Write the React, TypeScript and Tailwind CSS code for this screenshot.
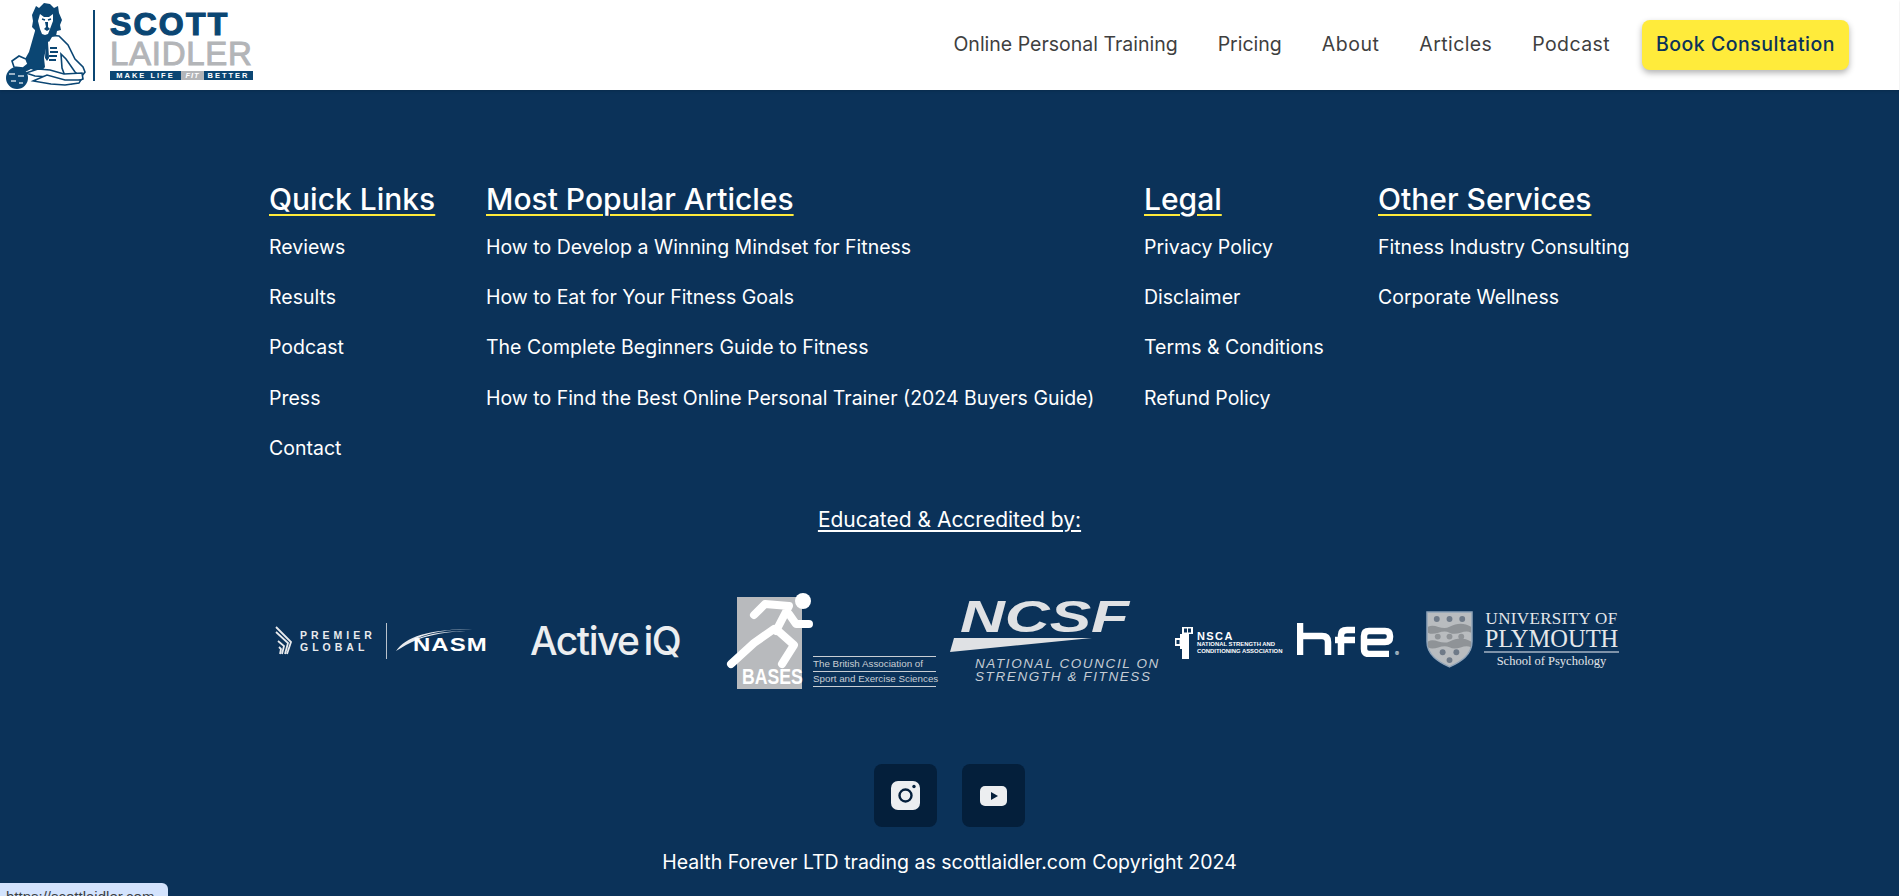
const font = "font-['Inter','Liberation_Sans',sans-serif]";

const navLinks = [
  { label: "Online Personal Training", tracking: "tracking-normal" },
  { label: "Pricing", tracking: "tracking-normal" },
  { label: "About", tracking: "tracking-[0.5px]" },
  { label: "Articles", tracking: "tracking-[0.4px]" },
  { label: "Podcast", tracking: "tracking-[0.4px]" },
];

const columns = [
  {
    title: "Quick Links",
    width: "w-[217px]",
    links: ["Reviews", "Results", "Podcast", "Press", "Contact"],
  },
  {
    title: "Most Popular Articles",
    width: "w-[658px]",
    links: [
      "How to Develop a Winning Mindset for Fitness",
      "How to Eat for Your Fitness Goals",
      "The Complete Beginners Guide to Fitness",
      "How to Find the Best Online Personal Trainer (2024 Buyers Guide)",
    ],
  },
  {
    title: "Legal",
    width: "w-[234px]",
    links: ["Privacy Policy", "Disclaimer", "Terms & Conditions", "Refund Policy"],
  },
  {
    title: "Other Services",
    width: "w-[260px]",
    links: ["Fitness Industry Consulting", "Corporate Wellness"],
  },
];

const Lion = () => (
  <svg viewBox="0 0 84 88" className="w-[84px] h-[88px] shrink-0">
    {/* torso and arm */}
    <path d="M44 34l12 1 9 9 7 14 8 8 2 5-4 5-6-5-9-13-5-5 1 14 3 8-22 3-6-10 4-18z" fill="#ffffff" stroke="#0b4673" strokeWidth="1.6" />
    {/* jacket */}
    <path d="M32 30l10 5 2 8-3 14 1 9-5 6-9-4-6 3-5-4 9-16 4-14z" fill="#0b4673" />
    <path d="M42 36l4 0-1 5 1 16-2 3-2-3 1-16z" fill="#0b4673" />
    {/* abs */}
    <path d="M47 47h7M47 51h8M46 55h8M46 59h7" stroke="#0b4673" strokeWidth="1.8" />
    {/* mane, jagged down to the shoulders */}
    <path d="M33 5l3 2 5-5 6 1 4 4 4-2 1 7 3 7-2 5 1 5-4 1-1 5-4 1-3 5-4-3-4 2-2-5-4-1 0-5-3-3 1-6-1-6z" fill="#0b4673" />
    {/* face */}
    <path d="M37 13l4 3 5 0 4-3 0 7-3 8-2 5-3 1-3-1-2-5-2-8z" fill="#ffffff" />
    <path d="M39 18l3 1M45 19l3-1" stroke="#0b4673" strokeWidth="1.4" />
    <path d="M42 21h3l0 5 2 2-3 2-3-2 2-2z" fill="#0b4673" />
    {/* legs */}
    <path d="M23 72l12-4 12 1 14 4 18-1 1 6-8 3-4 2-10-2-12-5-14-1z" fill="#ffffff" stroke="#0b4673" strokeWidth="1.6" />
    <path d="M30 80l14-6 18 5 16 0-2 3-14 2-14-1z" fill="#ffffff" stroke="#0b4673" strokeWidth="1.4" />
    {/* kettlebell */}
    <circle cx="14" cy="77" r="11" fill="#0b4673" />
    <path d="M6 73h6M15 75h6M8 80h5M16 82h4" stroke="#c7d6e2" strokeWidth="1.3" />
    {/* hand */}
    <path d="M9 60l7-5 7 3 2 5-5 4-9-1z" fill="#ffffff" stroke="#0b4673" strokeWidth="1.6" />
  </svg>
);

const Logo = () => (
  <div className="flex items-center h-[90px] pl-[3px] select-none">
    <Lion />
    <div className="w-[2px] h-[71px] bg-[#0b4673] ml-[6px] mr-[15px]" />
    <div className="flex flex-col w-[143px] font-['Liberation_Sans',sans-serif]">
      <span className="text-[32px] leading-[27px] font-bold text-[#0b4673] tracking-[2.2px] [-webkit-text-stroke:1.2px_#0b4673]">SCOTT</span>
      <span className="text-[33px] leading-[31px] text-[#b3b5b8] tracking-[0.7px] [-webkit-text-stroke:1px_#b3b5b8]">LAIDLER</span>
      <div className="flex h-[9px] mt-[2px] text-[7.5px] leading-[9px] font-bold text-white tracking-[2px] text-center">
        <span className="w-[71px] bg-[#0b4673]">MAKE LIFE</span>
        <span className="w-[23px] bg-[#b3b5b8] italic tracking-[1px]">FIT</span>
        <span className="flex-1 bg-[#0b4673]">BETTER</span>
      </div>
    </div>
  </div>
);

const Header = () => (
  <header className="relative z-10 flex items-center justify-between h-[90px] bg-white pr-[50px] shadow-sm">
    <Logo />
    <nav className="flex items-center">
      <div className="flex items-center gap-[40px] mr-[32px]">
        {navLinks.map((link) => (
          <a key={link.label} className={`text-[19.5px] text-[#3f3f3f] whitespace-nowrap ${link.tracking}`}>
            {link.label}
          </a>
        ))}
      </div>
      <a className="flex items-center justify-center w-[207px] h-[50px] rounded-lg bg-[#ffeb3b] text-[19.5px] font-medium tracking-[0.5px] text-[#0b3259] shadow-[0_3px_6px_rgba(0,0,0,0.3)] whitespace-nowrap">
        Book Consultation
      </a>
    </nav>
  </header>
);

const LinkColumns = () => (
  <div className="flex pl-[269px] pt-[89px]">
    {columns.map((col) => (
      <div key={col.title} className={`${col.width} shrink-0`}>
        <h3 className="text-[30px] leading-[40px] font-medium text-white underline decoration-[#ffeb3b] decoration-[1.5px] underline-offset-[4px] whitespace-nowrap">
          {col.title}
        </h3>
        <ul className="mt-[14px] flex flex-col gap-[22px]">
          {col.links.map((link) => (
            <li key={link} className="text-[19.5px] leading-[28.2px] text-white whitespace-nowrap">
              {link}
            </li>
          ))}
        </ul>
      </div>
    ))}
  </div>
);

const PremierNasm = () => (
  <div className="flex items-center w-[212px] ml-[275px] h-[40px] mb-[4px]">
    <svg viewBox="0 0 18 30" className="w-[18px] h-[30px] shrink-0" fill="none" stroke="#e8eaed" strokeWidth="1.8">
      <path d="M1 1l15 15-4 12M1 6l12 11-3 11M3 15l6 5-2 8M4 21l2 2-1 5" />
    </svg>
    <div className="ml-[7px] w-[76px] shrink-0 text-[10.5px] leading-[12px] font-bold text-[#e8eaed] tracking-[4px] font-['Liberation_Sans',sans-serif]">
      <div>PREMIER</div>
      <div>GLOBAL</div>
    </div>
    <div className="w-[1px] h-[36px] bg-[#b9c2cc] ml-[10px] mr-[9px] shrink-0" />
    <div className="relative w-[92px] h-[36px] shrink-0">
      <svg viewBox="0 0 92 36" className="absolute inset-0 w-full h-full" fill="#e8eaed">
        <path d="M0 28C10 14 30 6 82 6 50 6 32 10 20 16 34 10 54 8 70 8 44 9 24 14 10 22z" />
      </svg>
      <span className="absolute left-[17px] top-[11px] origin-left scale-x-[1.33] text-[18px] leading-[22px] font-bold text-white tracking-[0.8px] font-['Liberation_Sans',sans-serif]">NASM</span>
    </div>
  </div>
);

const Bases = () => (
  <div className="relative w-[200px] h-[94px] ml-[10px]">
    <div className="absolute left-0 top-[1px] w-[65px] h-[92px] bg-[#b8babd]">
      <span className="absolute bottom-[1px] left-[5px] origin-left scale-x-[0.8] text-[22px] leading-[22px] font-bold text-white font-['Liberation_Sans',sans-serif]">BASES</span>
    </div>
    {/* runner */}
    <svg viewBox="0 0 240 110" className="absolute left-[-27px] top-[-13px] w-[240px] h-[110px]" fill="none" stroke="#ffffff" strokeWidth="8" strokeLinecap="round" strokeLinejoin="round">
      <circle cx="93" cy="18" r="8" fill="#ffffff" stroke="none" />
      <path d="M44 32l11-11 24 2-13 25M79 31l7 10h13" />
      <path d="M66 46l18 16-12 19" />
      <path d="M64 46l-20 14-23 21" />
    </svg>
    <div className="absolute left-[76px] top-[60px] w-[123px] border-y border-[#c9ced4] text-[9.8px] leading-[14px] text-[#c9ced4] font-['Liberation_Sans',sans-serif] whitespace-nowrap">
      <div className="border-b border-[#c9ced4]">The British Association of</div>
      <div>Sport and Exercise Sciences</div>
    </div>
  </div>
);

const Ncsf = () => (
  <div className="relative w-[212px] h-[80px] ml-[13px] mb-[2px]">
    <span className="absolute left-[10px] top-[-10px] origin-left scale-x-[1.38] text-[45px] leading-[50px] font-bold italic text-[#dfe1e4] font-['Liberation_Sans',sans-serif]">NCSF</span>
    <svg viewBox="0 0 142 14" className="absolute left-0 top-[36px] w-[142px] h-[14px]" fill="#dfe1e4">
      <path d="M4 0h138L0 14z" />
    </svg>
    <div className="absolute left-[25px] top-[55px] text-[13.5px] leading-[13px] italic text-[#c5ccd4] font-['Liberation_Sans',sans-serif] tracking-[1.6px] whitespace-nowrap">
      <div>NATIONAL COUNCIL ON</div>
      <div>STRENGTH &amp; FITNESS</div>
    </div>
  </div>
);

const Nsca = () => (
  <div className="flex items-center w-[107px] h-[32px] ml-[13px]">
    <svg viewBox="0 0 22 32" className="w-[22px] h-[32px] shrink-0" fill="#ffffff">
      <path d="M7 0h11v7h-4v25H7V22H5v-3H0v-8h5V7h2z" />
      <path d="M9 1.5h3v4H9zM13 1.5h3v4h-3zM1.5 13h3v4h-3z" fill="#0b3259" />
    </svg>
    <div className="font-['Liberation_Sans',sans-serif] font-bold text-white whitespace-nowrap">
      <div className="text-[11px] leading-[10px] tracking-[1.4px]">NSCA</div>
      <div className="text-[5.9px] leading-[7px]">NATIONAL STRENGTH AND</div>
      <div className="text-[5.9px] leading-[7px]">CONDITIONING ASSOCIATION</div>
    </div>
  </div>
);

const Hfe = () => (
  <div className="relative w-[102px] h-[34px] ml-[15px] mb-[6px]">
    <svg viewBox="0 0 102 34" className="w-[102px] h-[34px]" fill="none" stroke="#ffffff" strokeWidth="6.5">
      <path d="M3 0v32M3 13h22q6 0 6 6v13" />
      <path d="M44 32V12q0-5 6-5h8M38 17h20" />
      <path d="M66 19h22q5 0 5-5v-1q0-5-5-5H72q-5 0-5 5v13q0 5 5 5h20" />
    </svg>
    <span className="absolute right-0 bottom-0 text-[6px] leading-[6px] text-white">®</span>
  </div>
);

const Plymouth = () => (
  <div className="flex items-center w-[195px] h-[60px] ml-[27px] mb-[8px]">
    <svg viewBox="0 0 48 58" className="w-[47px] h-[57px] shrink-0">
      <path d="M1 1h46v30c0 14-12 21-23 26C13 52 1 45 1 31z" fill="#b9bcbf" stroke="#8fa3b8" strokeWidth="1.5" />
      <path d="M2 16c7-4 14 4 22 0s15-4 22 0v6c-7-4-14 4-22 0s-15 4-22 0zM2 31c7-4 14 4 22 0s15-4 22 0v6c-7-4-14 4-22 0s-15 4-22 0z" fill="#8f9397" />
      <circle cx="11" cy="8" r="3" fill="#6f7a88" />
      <circle cx="24" cy="8" r="3" fill="#6f7a88" />
      <circle cx="37" cy="8" r="3" fill="#6f7a88" />
      <circle cx="12" cy="26" r="3" fill="#8f9397" />
      <circle cx="24" cy="26" r="3" fill="#8f9397" />
      <circle cx="36" cy="26" r="3" fill="#8f9397" />
      <circle cx="17" cy="42" r="3" fill="#6f7a88" />
      <circle cx="31" cy="42" r="3" fill="#6f7a88" />
      <circle cx="24" cy="50" r="3" fill="#6f7a88" />
    </svg>
    <div className="ml-[11px] w-[135px] text-center text-[#e4e7ea] font-['Liberation_Serif',serif] whitespace-nowrap">
      <div className="text-[17px] leading-[18px] tracking-[0.35px]">UNIVERSITY OF</div>
      <div className="text-[24.5px] leading-[22px] border-b-2 border-[#7f93a9] pb-[1px]">PLYMOUTH</div>
      <div className="text-[12.5px] leading-[15px] mt-[1px]">School of Psychology</div>
    </div>
  </div>
);

const Accreditations = () => (
  <div className="flex items-center h-[94px] mt-[61px]">
    <PremierNasm />
    <span className="ml-[43px] w-[152px] mb-[4px] text-[39px] leading-[40px] font-medium text-[#eceef0] tracking-[-1.5px] [word-spacing:-4px] whitespace-nowrap">
      Active iQ
    </span>
    <div className="ml-[45px]">
      <Bases />
    </div>
    <Ncsf />
    <Nsca />
    <Hfe />
    <Plymouth />
  </div>
);

const Socials = () => (
  <div className="flex justify-center gap-[25px] mt-[74px]">
    <a className="flex items-center justify-center w-[63px] h-[63px] rounded-lg bg-[#041f3b]">
      <svg viewBox="0 0 29 29" className="w-[29px] h-[29px]">
        <rect width="29" height="29" rx="7" fill="#eceef0" />
        <circle cx="14.5" cy="14.5" r="6" fill="none" stroke="#041f3b" strokeWidth="2.4" />
        <circle cx="23" cy="5.5" r="1.7" fill="#041f3b" />
      </svg>
    </a>
    <a className="flex items-center justify-center w-[63px] h-[63px] rounded-lg bg-[#041f3b]">
      <svg viewBox="0 0 27 20" className="w-[27px] h-[20px]">
        <rect width="27" height="20" rx="5" fill="#eceef0" />
        <path d="M11 6l7 4-7 4z" fill="#041f3b" />
      </svg>
    </a>
  </div>
);

export default function App() {
  return (
    <div className="relative h-[896px] overflow-hidden bg-white">
      <div className={`${font} w-[1899px] h-[896px] bg-[#0b3259]`}>
        <Header />
        <LinkColumns />
        <p className="mt-[43px] text-center text-[21px] leading-[30px] text-white underline underline-offset-[3px]">
          Educated &amp; Accredited by:
        </p>
        <Accreditations />
        <Socials />
        <p className="mt-[21px] text-center text-[19.5px] leading-[28px] text-white">
          Health Forever LTD trading as scottlaidler.com Copyright 2024
        </p>
      </div>
      <div className="absolute left-0 bottom-0 w-[168px] h-[13px] overflow-hidden rounded-tr-md bg-[#d3e3fd] pl-[6px] pt-[5px] text-[15px] leading-[18px] text-[#3c4043] font-['Liberation_Sans',sans-serif]">
        https://scottlaidler.com
      </div>
    </div>
  );
}
